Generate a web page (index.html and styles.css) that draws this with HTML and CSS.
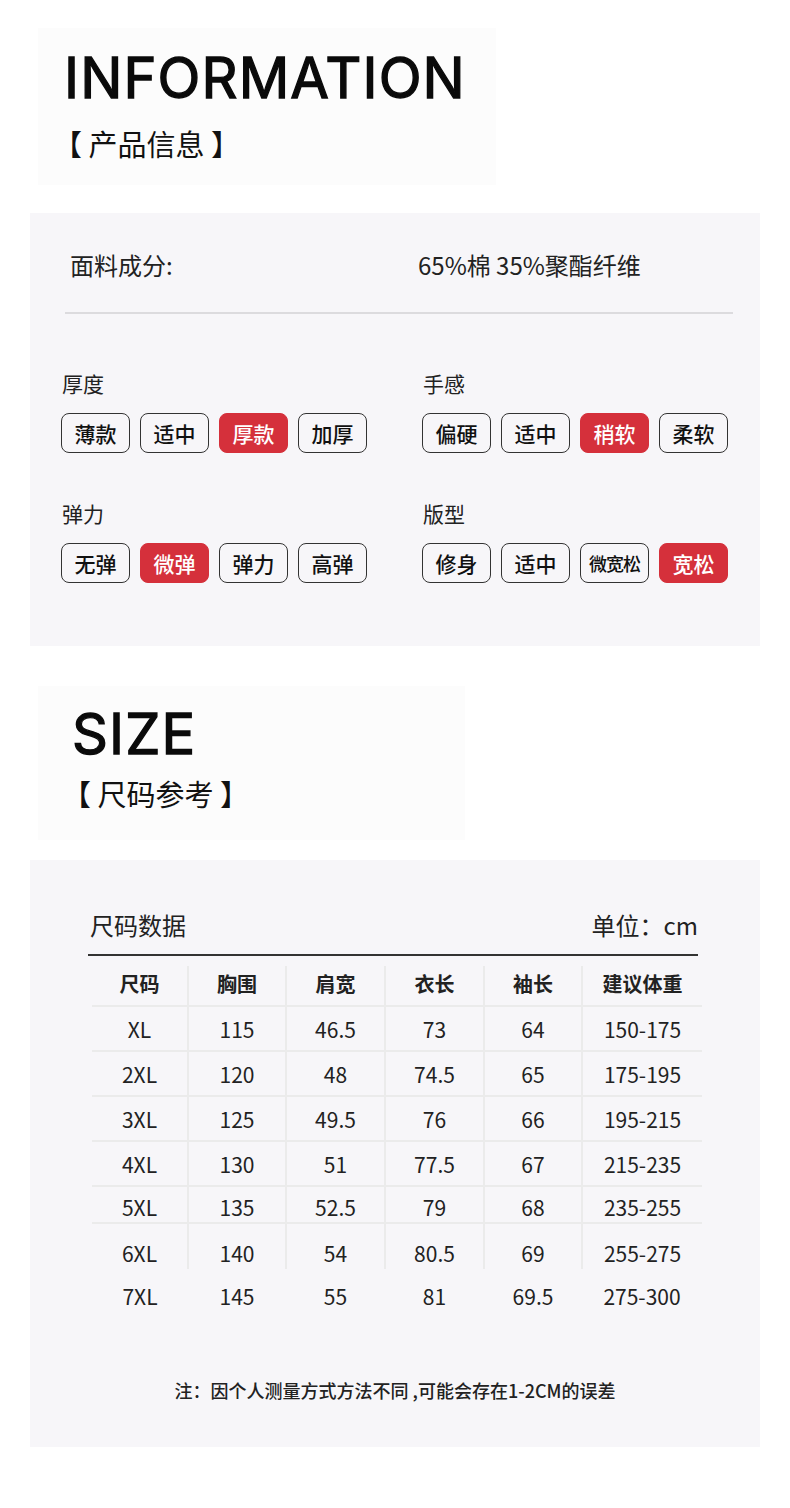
FILE: index.html
```html
<!DOCTYPE html>
<html lang="zh-CN">
<head>
<meta charset="utf-8">
<title>Product Information</title>
<link rel="stylesheet" href="styles.css">
</head>
<body>
<div class="page">
  <header class="title-box info-box">
    <h1 class="en">INFORMATION</h1>
    <h2 class="cn">【 产品信息 】</h2>
  </header>

  <section class="panel spec">
    <div class="fabric">
      <span class="fabric-k">面料成分:</span>
      <span class="fabric-v">65%棉 35%聚酯纤维</span>
    </div>
    <div class="rule"></div>
    <div class="attrs">
      <div class="attr">
        <div class="label">厚度</div>
        <div class="tags">
          <span class="tag">薄款</span><span class="tag">适中</span><span class="tag on">厚款</span><span class="tag">加厚</span>
        </div>
      </div>
      <div class="attr">
        <div class="label">手感</div>
        <div class="tags">
          <span class="tag">偏硬</span><span class="tag">适中</span><span class="tag on">稍软</span><span class="tag">柔软</span>
        </div>
      </div>
      <div class="attr">
        <div class="label">弹力</div>
        <div class="tags">
          <span class="tag">无弹</span><span class="tag on">微弹</span><span class="tag">弹力</span><span class="tag">高弹</span>
        </div>
      </div>
      <div class="attr">
        <div class="label">版型</div>
        <div class="tags">
          <span class="tag">修身</span><span class="tag">适中</span><span class="tag small">微宽松</span><span class="tag on">宽松</span>
        </div>
      </div>
    </div>
  </section>

  <header class="title-box size-box">
    <h1 class="en">SIZE</h1>
    <h2 class="cn">【 尺码参考 】</h2>
  </header>

  <section class="panel sizes">
    <div class="size-head">
      <span>尺码数据</span>
      <span>单位：cm</span>
    </div>
    <div class="dark-rule"></div>
    <table class="size-table">
      <colgroup>
        <col class="c1"><col class="c2"><col class="c3"><col class="c4"><col class="c5"><col class="c6">
      </colgroup>
      <thead>
        <tr><th>尺码</th><th>胸围</th><th>肩宽</th><th>衣长</th><th>袖长</th><th>建议体重</th></tr>
      </thead>
      <tbody>
        <tr><td>XL</td><td>115</td><td>46.5</td><td>73</td><td>64</td><td>150-175</td></tr>
        <tr><td>2XL</td><td>120</td><td>48</td><td>74.5</td><td>65</td><td>175-195</td></tr>
        <tr><td>3XL</td><td>125</td><td>49.5</td><td>76</td><td>66</td><td>195-215</td></tr>
        <tr><td>4XL</td><td>130</td><td>51</td><td>77.5</td><td>67</td><td>215-235</td></tr>
        <tr class="r5"><td>5XL</td><td>135</td><td>52.5</td><td>79</td><td>68</td><td>235-255</td></tr>
        <tr class="r6"><td>6XL</td><td>140</td><td>54</td><td>80.5</td><td>69</td><td>255-275</td></tr>
        <tr class="r7"><td>7XL</td><td>145</td><td>55</td><td>81</td><td>69.5</td><td>275-300</td></tr>
      </tbody>
    </table>
    <p class="note">注：因个人测量方式方法不同 ,可能会存在1-2CM的误差</p>
  </section>
</div>
</body>
</html>
```

FILE: styles.css
```css
* { box-sizing: border-box; }
html, body { margin: 0; padding: 0; background: #ffffff; }
body {
  font-family: "Noto Sans CJK SC", "Noto Sans", sans-serif;
  color: #222;
}
.page {
  width: 790px;
  padding-top: 28px;
  padding-bottom: 61px;
}

/* Title boxes */
.title-box {
  background: #fcfcfc;
  margin: 0;
}
.title-box h1, .title-box h2 { margin: 0; font-weight: normal; }
.en {
  font-family: "Inter", "Liberation Sans", sans-serif;
  font-weight: 600;
  font-size: 56px;
  line-height: 60px;
  color: #0a0a0a;
  -webkit-text-stroke: 1.3px #0a0a0a;
  letter-spacing: 1.1px;
}
.cn {
  font-size: 29px;
  line-height: 36px;
  color: #111;
}
.info-box {
  margin-left: 38px;
  width: 458px;
  height: 157px;
  padding: 20px 0 0 26px;
}
.info-box .cn { margin-top: 17px; margin-left: -11px; }
.size-box {
  margin-left: 38px;
  margin-top: 40px;
  width: 427px;
  height: 154px;
  padding: 18px 0 0 34px;
}
.size-box .cn { margin-top: 11px; margin-left: -10px; }

/* Panels */
.panel {
  background: #f7f6f9;
  margin-left: 30px;
  width: 730px;
}
.spec {
  margin-top: 28px;
  padding: 37px 27px 63px 35px;
}
.fabric {
  display: grid;
  grid-template-columns: 353px 1fr;
  font-size: 24px;
  line-height: 30px;
  color: #222;
  padding-left: 5px;
}
.fabric-v { margin-left: -5px; }
.rule {
  height: 2px;
  background: #dcdbde;
  margin-top: 32px;
}
.attrs {
  display: grid;
  grid-template-columns: 361px 1fr;
  row-gap: 46px;
  margin-top: 55px;
  margin-left: -3px;
}
.label {
  font-size: 21px;
  line-height: 28px;
  color: #222;
}
.tags {
  display: flex;
  gap: 10px;
  margin-top: 16px;
  margin-left: -1px;
}
.tag {
  width: 69px;
  height: 40px;
  border: 1px solid #333;
  border-radius: 8px;
  display: flex;
  align-items: center;
  justify-content: center;
  font-size: 21px;
  font-weight: 500;
  color: #111;
}
.tag.small { font-size: 18px; letter-spacing: -1px; }
.tag.on {
  background: #d5303b;
  border-color: #d5303b;
  color: #fff;
}

/* Size panel */
.sizes {
  margin-top: 20px;
  padding: 50px 0 0 0;
  height: 587px;
}
.size-head {
  display: flex;
  justify-content: space-between;
  margin-left: 60px;
  width: 608px;
  font-size: 24px;
  line-height: 30px;
  color: #222;
}
.dark-rule {
  margin-left: 58px;
  width: 610px;
  height: 2px;
  background: #333;
  margin-top: 14px;
}
.size-table {
  margin-left: 62px;
  margin-top: 10px;
  width: 610px;
  border-collapse: collapse;
  table-layout: fixed;
  font-size: 21px;
  color: #222;
}
.c1 { width: 96px; }
.c2 { width: 98px; }
.c3 { width: 99px; }
.c4 { width: 99px; }
.c5 { width: 98px; }
.c6 { width: 120px; }
.size-table th, .size-table td {
  text-align: center;
  padding: 0;
  border-right: 2px solid #ebebeb;
  border-bottom: 2px solid #ebebeb;
}
.size-table th {
  height: 40px;
  font-weight: 700;
  font-size: 20px;
  padding-bottom: 4px;
}
.size-table td { height: 45px; }
.size-table th:last-child, .size-table td:last-child { border-right: none; }
.size-table tr.r5 td { height: 37px; padding-top: 5px; }
.size-table tr.r6 td { height: 46px; padding-top: 12px; border-bottom: none; }
.size-table tr.r7 td { height: 45px; padding-top: 9px; border-right: none; border-bottom: none; }
.note {
  margin: 64px 0 0 0;
  text-align: center;
  font-size: 18px;
  line-height: 24px;
  color: #222;
  font-weight: 500;
}
```
